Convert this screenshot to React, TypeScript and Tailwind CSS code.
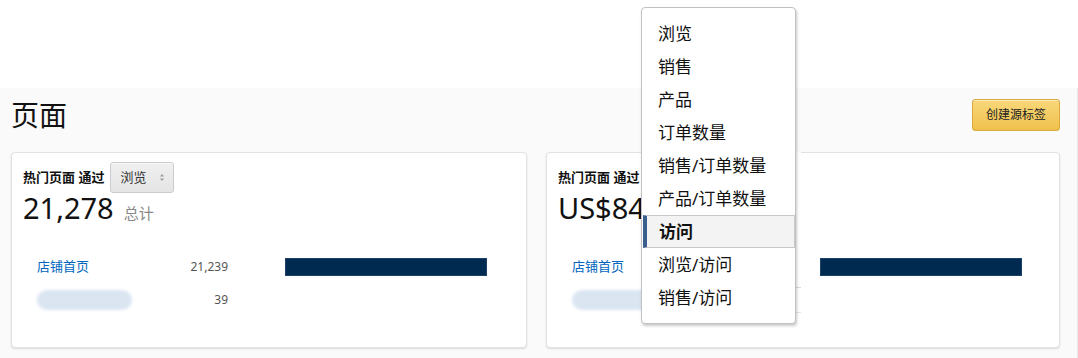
import React from "react";

const FONT = '"Noto Sans", "Noto Sans CJK SC", sans-serif';

function SelectBox({ label }: { label: string }) {
  return (
    <div className="flex h-[31px] w-[64px] items-center rounded-[3px] border border-[#c9cbce] bg-gradient-to-b from-[#efefef] to-[#e5e5e5] pl-[9px] pr-[8px] shadow-[0_1px_0_rgba(255,255,255,0.6)_inset]">
      <span className="text-[13px] leading-none text-[#333]">{label}</span>
      <svg className="ml-auto" width="6" height="9" viewBox="0 0 6 9">
        <path d="M3 1 L5 3.5 H1 Z" fill="#9a9a9a" />
        <path d="M3 8 L5 5.5 H1 Z" fill="#9a9a9a" />
      </svg>
    </div>
  );
}

function Card({
  value,
  select,
  rowNum1,
  rowNum2,
}: {
  value: string;
  select: string;
  rowNum1: string;
  rowNum2: string;
}) {
  return (
    <div className="h-[196px] rounded-[4px] border border-[#e2e2e2] bg-white px-[11px] pt-[9px] shadow-[0_1px_2px_rgba(0,0,0,0.13)]">
      <div className="flex h-[31px] items-center gap-[6px]">
        <span className="text-[13px] font-bold leading-none text-[#111]">热门页面 通过</span>
        <SelectBox label={select} />
      </div>
      <div className="flex h-[30px] items-baseline">
        <span className="text-[29px] leading-[30px] text-[#111]">{value}</span>
        <span className="ml-[10px] text-[15px] leading-[30px] text-[#888]">总计</span>
      </div>
      <div className="mt-[27px] pl-[14px]">
        <div className="grid h-[33px] grid-cols-[130px_61px_57px_202px] items-center">
          <span className="text-[13px] leading-none text-[#0066c0]">店铺首页</span>
          <span className="text-right text-[12px] leading-none text-[#555]">{rowNum1}</span>
          <span />
          <div className="h-[18px] w-full border border-[#1c4068] bg-[#002a4f]" />
        </div>
        <div className="grid h-[33px] grid-cols-[130px_61px_57px_202px] items-center">
          <div className="h-[20px] w-[95px] rounded-full bg-[#dbe5f2] blur-[1.5px]" />
          <span className="text-right text-[12px] leading-none text-[#555]">{rowNum2}</span>
          <span />
          <span />
        </div>
      </div>
    </div>
  );
}

const items = [
  "浏览",
  "销售",
  "产品",
  "订单数量",
  "销售/订单数量",
  "产品/订单数量",
  "访问",
  "浏览/访问",
  "销售/访问",
];

export default function App() {
  return (
    <div className="relative h-[358px] w-[1078px] overflow-hidden bg-white" style={{ fontFamily: FONT }}>
      <div className="h-[88px]" />
      <div className="h-[270px] border-r border-[#e6e6e6] bg-[#fafafa] pl-[11px] pr-[17px] pt-[11px]">
        <div className="flex h-[32px] items-center justify-between">
          <h1 className="text-[28px] font-normal leading-none text-[#111]">页面</h1>
          <button className="h-[32px] w-[88px] rounded-[3px] border border-[#d9ab3d] bg-gradient-to-b from-[#f8d77a] to-[#f0c14b] text-[12px] leading-none text-[#222] shadow-[0_1px_0_rgba(255,255,255,0.5)_inset]">
            创建源标签
          </button>
        </div>
        <div className="mt-[21px] grid grid-cols-[516px_514px] gap-[19px]">
          <Card value="21,278" select="浏览" rowNum1="21,239" rowNum2="39" />
          <Card value="US$84,516" select="访问" rowNum1="8,873" rowNum2="12" />
        </div>
      </div>

      {/* backdrop strip next to the native dropdown */}
      <div className="absolute left-[796px] top-[152px] h-[173px] w-[5px] bg-white">
        <div className="mt-[135px] h-px bg-[#dcdcdc]" />
        <div className="mt-[24px] h-px bg-[#e6e6e6]" />
      </div>

      {/* open dropdown */}
      <div className="absolute left-[641px] top-[7px] h-[317px] w-[155px] rounded-[4px] border border-[#c2c2c2] bg-white py-[9px] shadow-[1px_2px_3px_rgba(0,0,0,0.22)]">
        {items.map((it) =>
          it === "访问" ? (
            <div
              key={it}
              className="ml-px mr-0 flex h-[33px] items-center border border-l-4 border-[#c8c8c8] border-l-[#3b5f8c] bg-[#f3f3f3] pl-[12px] text-[17px] font-bold leading-none text-[#111]"
            >
              {it}
            </div>
          ) : (
            <div key={it} className="flex h-[33px] items-center pl-[16px] text-[17px] leading-none text-[#111]">
              {it}
            </div>
          )
        )}
      </div>
    </div>
  );
}
